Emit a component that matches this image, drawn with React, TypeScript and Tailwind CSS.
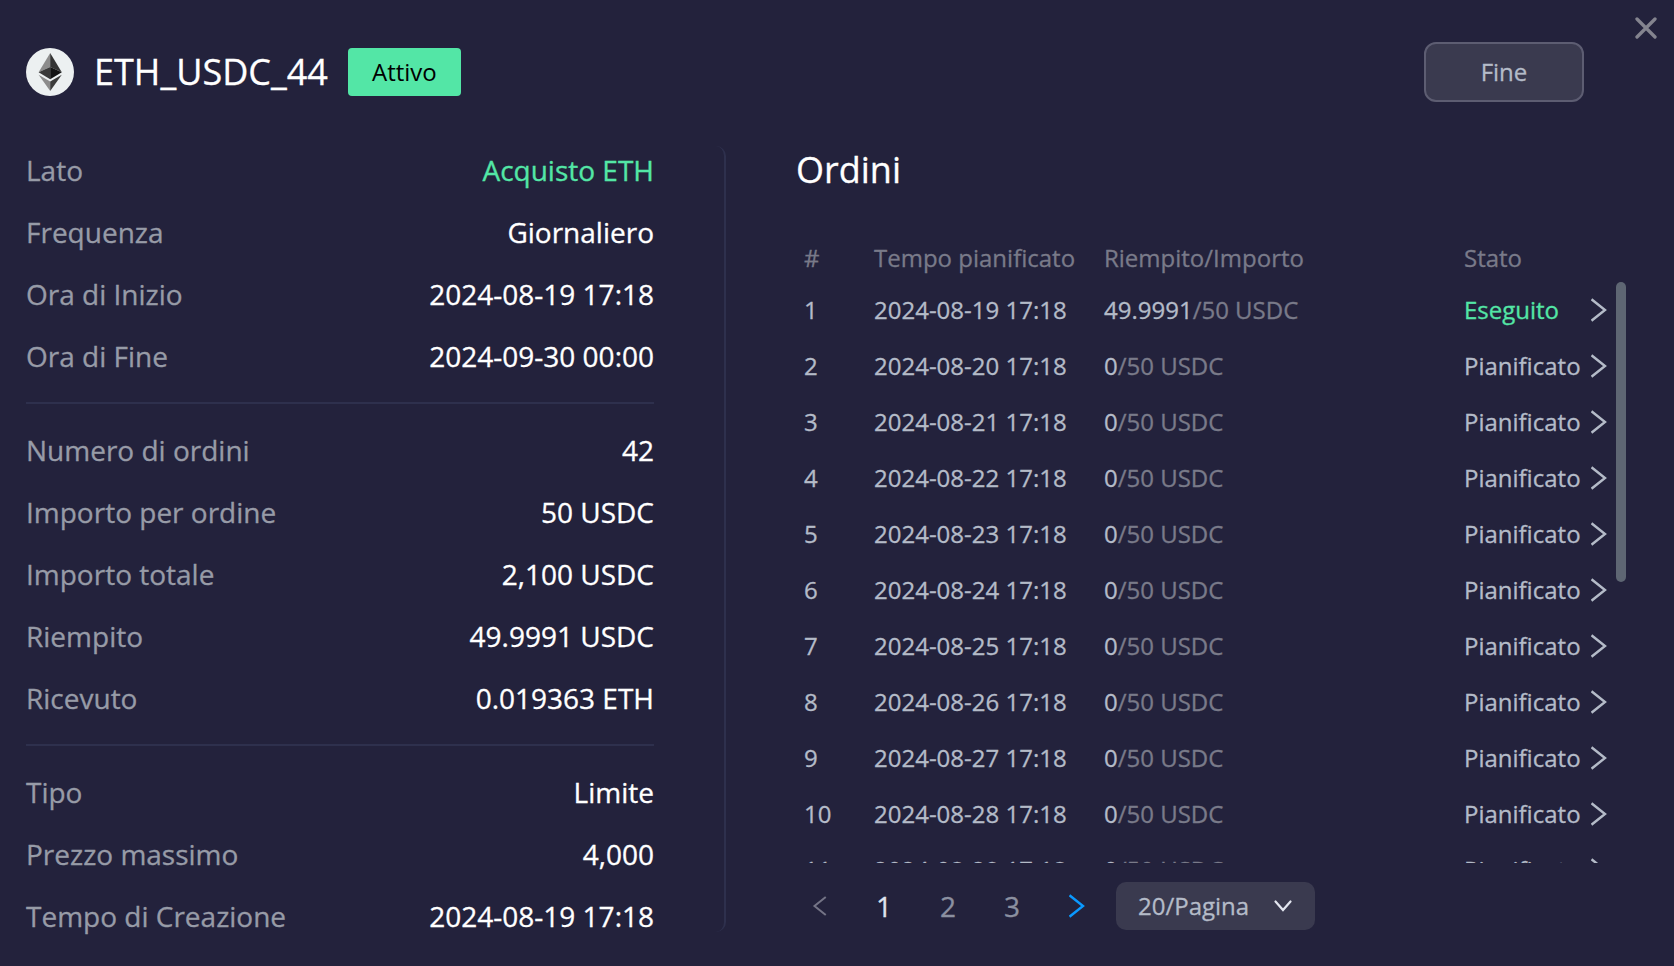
import React from "react";

type Detail = { label: string; value: string; accent?: boolean };

const groups: Detail[][] = [
  [
    { label: "Lato", value: "Acquisto ETH", accent: true },
    { label: "Frequenza", value: "Giornaliero" },
    { label: "Ora di Inizio", value: "2024-08-19 17:18" },
    { label: "Ora di Fine", value: "2024-09-30 00:00" },
  ],
  [
    { label: "Numero di ordini", value: "42" },
    { label: "Importo per ordine", value: "50 USDC" },
    { label: "Importo totale", value: "2,100 USDC" },
    { label: "Riempito", value: "49.9991 USDC" },
    { label: "Ricevuto", value: "0.019363 ETH" },
  ],
  [
    { label: "Tipo", value: "Limite" },
    { label: "Prezzo massimo", value: "4,000" },
    { label: "Tempo di Creazione", value: "2024-08-19 17:18" },
  ],
];

const orders = Array.from({ length: 11 }, (_, i) => ({
  id: i + 1,
  time: `2024-08-${19 + i} 17:18`,
  filled: i === 0 ? "49.9991" : "0",
  done: i === 0,
}));

function EthLogo() {
  return (
    <svg viewBox="0 0 48 48" className="size-12 shrink-0">
      <circle cx="24" cy="24" r="24" fill="#ecf0f1" />
      <path d="M24.2 5v14L12.6 24.3z" fill="#8c8c8c" />
      <path d="M24.2 5v14l11.6 5.3z" fill="#343434" />
      <path d="M24.2 19v12.200L12.600 24.300z" fill="#393939" />
      <path d="M24.200 19v12.200L35.800 24.300z" fill="#141414" />
      <path d="M24.200 33.400V43L12.600 26.700z" fill="#8c8c8c" />
      <path d="M24.200 33.400V43L35.800 26.700z" fill="#3c3c3b" />
    </svg>
  );
}

function Chevron({ className }: { className: string }) {
  return (
    <svg viewBox="0 0 16 24" fill="none" stroke="currentColor" strokeWidth="2.4" className={className}>
      <path d="M0.500 1.300l13.500 10.700L0.500 22.700" />
    </svg>
  );
}

export default function App() {
  return (
    <div className="relative h-[966px] w-[1674px] overflow-hidden bg-[#23223c] font-['Open_Sans',sans-serif] text-white [-webkit-text-stroke:0.3px_currentColor]">
      <header className="flex h-[139px] items-start pt-[42px] pr-[90px] pl-[26px]">
        <div className="flex h-[60px] items-center">
          <EthLogo />
          <h1 className="ml-5 text-[36px] leading-[48px]">ETH_USDC_44</h1>
          <span className="ml-5 flex h-12 w-[113px] items-center justify-center rounded bg-[#53e6a6] text-2xl text-black [-webkit-text-stroke:0]">
            Attivo
          </span>
        </div>
        <button className="ml-auto flex h-[60px] w-40 items-center justify-center rounded-xl border-2 border-[#5d5d72] bg-[#3a3a4f] text-2xl text-[#b4bbc8]">
          Fine
        </button>
      </header>
      <svg
        viewBox="0 0 22 22"
        className="absolute top-[17px] left-[1635px] size-[22px] text-[#84848f]"
        stroke="currentColor"
        strokeWidth="3.3"
        strokeLinecap="round"
      >
        <path d="M2 2l18 18M20 2L2 20" />
      </svg>

      <main className="flex">
        <section className="mt-[7px] h-[786px] w-[726px] rounded-r-[10px] border-r-2 border-[#2e304d] pr-[70px] pl-[26px]">
          <div className="-mt-[7px]">
            {groups.map((group, i) => (
              <div key={i} className={i > 0 ? "mt-[15px] border-t-2 border-[#2e304d] pt-[15px]" : ""}>
                {group.map((d) => (
                  <div key={d.label} className="flex h-[62px] items-center justify-between text-[28px]">
                    <span className="text-[#979ba7]">{d.label}</span>
                    <span className={d.accent ? "text-[#53e6a6]" : ""}>{d.value}</span>
                  </div>
                ))}
              </div>
            ))}
          </div>
        </section>

        <section className="flex-1 pt-px pl-[70px]">
          <h2 className="h-[90px] pt-[6px] text-[36px] leading-[48px]">Ordini</h2>
          <div className="flex h-[52px] items-center pt-[4px] pl-2 text-2xl text-[#797a89]">
            <span className="w-[70px]">#</span>
            <span className="w-[230px]">Tempo pianificato</span>
            <span className="w-[360px]">Riempito/Importo</span>
            <span>Stato</span>
          </div>
          <div className="flex h-[581px] items-start overflow-hidden">
            <div className="-mt-[0.5px] w-[820px] pl-2">
              {orders.map((o) => (
                <div key={o.id} className="flex h-14 items-center text-2xl text-[#b4bbc8]">
                  <span className="w-[70px]">{o.id}</span>
                  <span className="w-[230px]">{o.time}</span>
                  <span className="w-[360px]">
                    {o.filled}
                    <span className="text-[#797a89]">/50 USDC</span>
                  </span>
                  <span className={o.done ? "w-[127px] text-[#53e6a6]" : "w-[127px]"}>
                    {o.done ? "Eseguito" : "Pianificato"}
                  </span>
                  <Chevron className="h-6 w-4" />
                </div>
              ))}
            </div>
            <div className="h-[300px] w-[10px] rounded-full bg-[#5e6673]" />
          </div>
          <nav className="flex h-[86px] items-center text-[28px] text-[#8b90a0]">
            <Chevron className="ml-[16px] h-5 w-[15px] rotate-180 text-[#747486]" />
            <span className="ml-[49px] w-4 text-[#dfe3ee]">1</span>
            <span className="ml-[48px] w-4">2</span>
            <span className="ml-[48px] w-4">3</span>
            <Chevron className="ml-[49px] h-6 w-4 text-[#0a99ff]" />
            <button className="ml-[31px] flex h-12 w-[199px] items-center rounded-[10px] bg-[#3a3a4f] pl-[22px] text-2xl text-[#b4bbc8]">
              20/Pagina
              <svg
                viewBox="0 0 18 12"
                fill="none"
                stroke="#e3e6f0"
                strokeWidth="2.2"
                strokeLinecap="round"
                className="ml-[25px] h-3 w-[18px]"
              >
                <path d="M1.500 1.500l7.500 8.500 7.500-8.500" />
              </svg>
            </button>
          </nav>
        </section>
      </main>
    </div>
  );
}
